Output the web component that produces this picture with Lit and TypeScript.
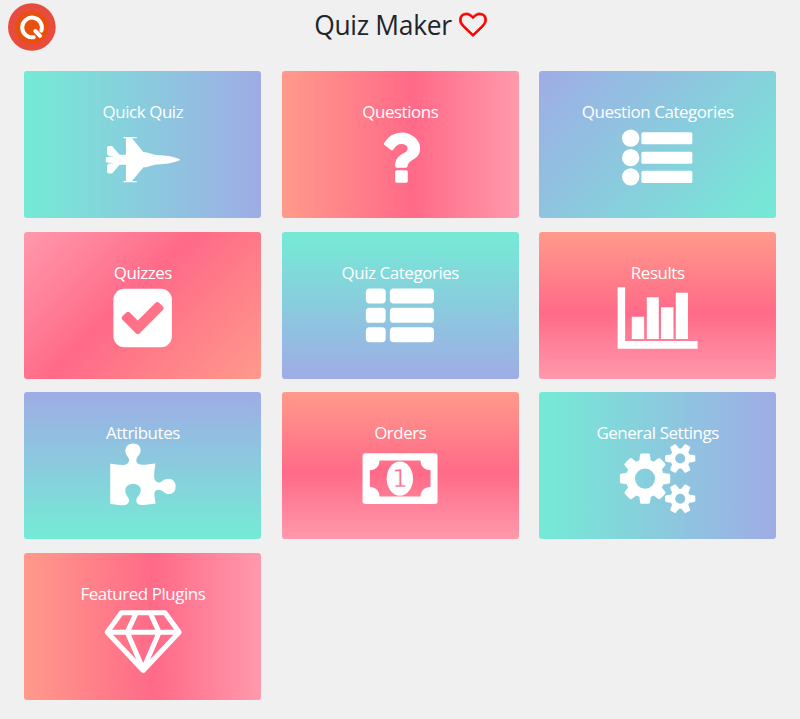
import { LitElement, html, svg, css } from "lit";
import { customElement } from "lit/decorators.js";
import { classMap } from "lit/directives/class-map.js";

const jet = svg`<path d="M1856 960q-1 32-288 96l-352 32-224 64h-64l-293 352h69q26 0 45 4.5t19 11.5-19 11.5-45 4.5h-288v-32h64v-416h-160l-192 224h-96l-32-32v-192h32v-32h128v-8l-192-24v-128l192-24v-8h-128v-32h-32v-192l32-32h96l192 224h160v-416h-64v-32h288q26 0 45 4.5t19 11.5-19 11.5-45 4.5h-69l293 352h64l224 64 352 32q128 28 200 52t80 34z"/>`;
const question = svg`<path d="M1088 1256v240q0 16-12 28t-28 12h-240q-16 0-28-12t-12-28v-240q0-16 12-28t28-12h240q16 0 28 12t12 28zm316-600q0 54-15.5 101t-35 76.5-55 59.5-57.5 43.5-61 35.5q-41 23-68.5 65t-27.5 67q0 17-12 32.5t-28 15.5h-240q-15 0-25.5-18.5t-10.5-37.5v-45q0-83 65-156.5t143-108.5q59-27 84-56t25-76q0-42-46.5-74t-107.5-32q-65 0-108 29-35 25-107 115-13 16-31 16-12 0-25-8l-164-125q-13-10-15.5-25t5.5-28q160-266 464-266 80 0 161 31t146 83 106 127.5 41 158.5z"/>`;
const check = svg`<path d="M813 1299l614-614q19-19 19-45t-19-45l-102-102q-19-19-45-19t-45 19l-467 467-211-211q-19-19-45-19t-45 19l-102 102q-19 19-19 45t19 45l358 358q19 19 45 19t45-19zm851-883v960q0 119-84.5 203.5t-203.5 84.5h-960q-119 0-203.5-84.5t-84.5-203.5v-960q0-119 84.5-203.5t203.5-84.5h960q119 0 203.5 84.5t84.5 203.5z"/>`;
const puzzle = svg`<path d="M1755 1083q0 81-44.5 135t-123.5 54q-41 0-77.5-17.5t-59-38-56.5-38-71-17.5q-110 0-110 124 0 39 16 115t15 115v5q-22 0-33 1-34 3-97.5 11.5t-115.5 13.5-98 5q-61 0-103-26.5t-42-83.5q0-37 17.5-71t38-56.5 38-59 17.5-77.5q0-79-54-123.5t-135-44.5q-84 0-143 45.5t-59 127.5q0 43 15 83t33.5 64.5 33.5 53 15 50.5q0 45-46 89-37 35-117 35-95 0-245-24-9-2-27.5-4t-27.5-4l-13-2q-1 0-3-1-2 0-2-1v-1024q2 1 17.5 3.5t34 5 21.5 3.5q150 24 245 24 80 0 117-35 46-44 46-89 0-22-15-50.5t-33.5-53-33.5-64.5-15-83q0-82 59-127.5t144-45.5q80 0 134 44.5t54 123.5q0 41-17.5 77.5t-38 59-38 56.5-17.5 71q0 57 42 83.5t103 26.5q64 0 180-15t163-17v2q-1 2-3.5 17.5t-5 34-3.5 21.5q-24 150-24 245 0 80 35 117 44 46 89 46 22 0 50.5-15t53-33.5 64.5-33.5 83-15q82 0 127.5 59t45.5 143z"/>`;
const gears = svg`<path d="M832 896q0-106-75-181t-181-75-181 75-75 181 75 181 181 75 181-75 75-181zm768 512q0-52-38-90t-90-38-90 38-38 90q0 53 37.5 90.5t90.5 37.5 90.5-37.5 37.5-90.5zm0-1024q0-52-38-90t-90-38-90 38-38 90q0 53 37.5 90.5t90.5 37.5 90.5-37.5 37.5-90.5zm-384 421v185q0 10-7 19.5t-16 10.5l-155 24q-11 35-32 76 34 48 90 115 7 11 7 20 0 12-7 19-23 30-82.5 89.5t-78.5 59.5q-11 0-21-7l-115-90q-37 19-77 31-11 108-23 155-7 24-30 24h-186q-11 0-20-7.5t-10-17.5l-23-153q-34-10-75-31l-118 89q-7 7-20 7-11 0-21-8-144-133-144-160 0-9 7-19 10-14 41-53t47-61q-23-44-35-82l-152-24q-10-1-17-9.5t-7-19.5v-185q0-10 7-19.5t16-10.5l155-24q11-35 32-76-34-48-90-115-7-11-7-20 0-12 7-20 22-30 82-89t79-59q11 0 21 7l115 90q34-18 77-32 11-108 23-154 7-24 30-24h186q11 0 20 7.5t10 17.5l23 153q34 10 75 31l118-89q8-7 20-7 11 0 21 8 144 133 144 160 0 8-7 19-12 16-42 54t-45 60q23 48 34 82l152 23q10 2 17 10.5t7 19.5zm640 533v140q0 16-149 31-12 27-30 52 51 113 51 138 0 4-4 7-122 71-124 71-8 0-46-47t-52-68q-20 2-30 2t-30-2q-14 21-52 68t-46 47q-2 0-124-71-4-3-4-7 0-25 51-138-18-25-30-52-149-15-149-31v-140q0-16 149-31 13-29 30-52-51-113-51-138 0-4 4-7 4-2 35-20t59-34 30-16q8 0 46 46.5t52 67.5q20-2 30-2t30 2q51-71 92-112l6-2q4 0 124 70 4 3 4 7 0 25-51 138 17 23 30 52 149 15 149 31zm0-1024v140q0 16-149 31-12 27-30 52 51 113 51 138 0 4-4 7-122 71-124 71-8 0-46-47t-52-68q-20 2-30 2t-30-2q-14 21-52 68t-46 47q-2 0-124-71-4-3-4-7 0-25 51-138-18-25-30-52-149-15-149-31v-140q0-16 149-31 13-29 30-52-51-113-51-138 0-4 4-7 4-2 35-20t59-34 30-16q8 0 46 46.5t52 67.5q20-2 30-2t30 2q51-71 92-112l6-2q4 0 124 70 4 3 4 7 0 25-51 138 17 23 30 52 149 15 149 31z"/>`;

const bullets = svg`${[234, 292.5, 350].map(
  (y) => svg`<circle cx="302.5" cy=${y} r="26"/><rect x="334.5" y=${y - 18} width="153" height="36.5" rx="5"/>`
)}`;
const blocks = svg`${[191.5, 249.5, 307.5].map(
  (y) => svg`<rect x="273" y=${y} width="59.5" height="45" rx="11"/><rect x="345" y=${y} width="132.5" height="45" rx="11"/>`
)}`;
const chart = svg`<path d="M263.5 187h22.5v161h217.500v23h-240z"/><path d="M306 275h37v67h-37zM351 217h36v125h-36zM393.500 246.500h37.500v95.500h-37.500zM438 203h36.500v139h-36.500z"/>`;
const money = svg`<path fill-rule="evenodd" d="M271 205H480Q488 205 488 213V349Q488 357 480 357H271Q263 357 263 349V213Q263 205 271 205ZM314 227C314 244 302 256 285 256V306C302 306 314 318 314 335H437C437 318 449 306 467 306V256C449 256 437 244 437 227Z"/><ellipse cx="375" cy="281" rx="39.500" ry="51.500"/><text class="digit" x="375" y="307" text-anchor="middle">1</text>`;
const diamond = svg`<path class="line" d="M318.500 202.500H449.500L492 261L384 375.500L276 261ZM276 261H492M362 205L336 261L384 372L432 261L406 205"/>`;

const items = [
  { label: "Quick Quiz", tone: "mint-right", box: "24 0 1792 1792", icon: jet },
  { label: "Questions", tone: "coral-right", box: "0 -12 1792 1792", icon: question },
  { label: "Question Categories", tone: "mint-corner", box: "276.4 185.4 211.2 211.2", icon: bullets },
  { label: "Quizzes", tone: "coral-corner", box: "-14 -50 1848 1848", icon: check },
  { label: "Quiz Categories", tone: "mint-down", box: "270.4 172 211.2 211.2", icon: blocks },
  { label: "Results", tone: "coral-down", box: "276.6 171 211.2 211.2", icon: chart },
  { label: "Attributes", tone: "mint-up", box: "34 -28 1792 1792", icon: puzzle },
  { label: "Orders", tone: "coral-down", box: "270.4 174.3 211.2 211.2", icon: money },
  { label: "General Settings", tone: "mint-right", box: "-10 -10 1792 1792", icon: gears },
  { label: "Featured Plugins", tone: "coral-right", box: "278.4 176 211.2 211.2", icon: diamond },
];

@customElement("app-root")
export class AppRoot extends LitElement {
  static styles = css`
    :host {
      display: block;
      box-sizing: border-box;
      height: 719px;
      background: #f0f0f0;
      overflow: hidden;
      font-family: "Open Sans", "Noto Sans", sans-serif;
    }
    .header {
      display: grid;
      grid-template-columns: 48px 1fr 48px;
      padding: 3px 8px 0;
      height: 68px;
      box-sizing: border-box;
    }
    .logo {
      width: 48px;
      height: 48px;
    }
    h1 {
      margin: 0;
      display: flex;
      justify-content: center;
      gap: 7px;
      height: 44px;
      align-items: center;
      font-size: 26.4px;
      letter-spacing: -0.28px;
      font-weight: 400;
      color: #212529;
      white-space: nowrap;
      padding-left: 1px;
    }
    .heart {
      width: 28px;
      height: 28px;
      fill: #f00;
      stroke: #f00;
      stroke-width: 50px;
      overflow: visible;
    }
    .grid {
      display: grid;
      grid-template-columns: repeat(3, 237px);
      grid-auto-rows: 147px;
      gap: 13.6px 20.4px;
      padding: 3px 0 0 24.4px;
    }
    .card {
      border-radius: 3px;
      box-sizing: border-box;
      padding-top: 31px;
      display: flex;
      flex-direction: column;
      align-items: center;
      color: #fff;
    }
    .label {
      font-size: 16.9px;
      letter-spacing: -0.42px;
      line-height: 19.8px;
      white-space: nowrap;
    }
    .icon {
      width: 70.4px;
      height: 70.4px;
      flex: none;
      overflow: visible;
      fill: #fff;
    }
    .line {
      fill: none;
      stroke: #fff;
      stroke-width: 15px;
      stroke-linejoin: round;
    }
    .digit {
      font: 75px "DejaVu Sans", sans-serif;
      fill: #ff6f8c;
      stroke: #fff;
      stroke-width: 1.5px;
    }
    .mint-right { background: linear-gradient(90deg, #74ebd5, #9face6); }
    .mint-down { background: linear-gradient(180deg, #74ebd5, #9face6); }
    .mint-up { background: linear-gradient(0deg, #74ebd5, #9face6); }
    .mint-corner { background: linear-gradient(315deg, #74ebd5, #9face6); }
    .coral-right { background: linear-gradient(90deg, #ff9a8b, #ff6a88 55%, #ff99ac); }
    .coral-down { background: linear-gradient(180deg, #ff9a8b, #ff6a88 55%, #ff99ac); }
    .coral-corner { background: linear-gradient(315deg, #ff9a8b, #ff6a88 55%, #ff99ac); }
  `;

  render() {
    return html`
      <header class="header">
        <svg class="logo" viewBox="24 9 144 144">
          <circle cx="95.500" cy="81" r="71.500" fill="#e84c3d" />
          <circle cx="95.500" cy="83" r="49.500" fill="#e8500e" />
          <path d="M124 92A29.500 29.500 0 1 0 101 111.500M106 93L120 107.500" fill="none" stroke="#fff" stroke-width="12" stroke-linecap="round" />
        </svg>
        <h1>
          <span>Quiz Maker</span>
          <svg class="heart" viewBox="-24 0 1840 1840">
            <path d="M1664 596q0-81-21.5-143t-55-98.5-81.5-59.5-94-31-98-8-112 25.5-110.5 64-86.5 72-60 61.5q-18 22-49 22t-49-22q-24-28-60-61.5t-86.5-72-110.5-64-112-25.5-98 8-94 31-81.5 59.5-55 98.5-21.5 143q0 168 187 355l581 560 580-559q188-188 188-356zm128 0q0 221-229 450l-623 600q-18 18-44 18t-44-18l-624-602q-10-8-27.5-26t-55.5-65.5-68-97.5-53.5-121-23.5-138q0-220 127-344t351-124q62 0 126.5 21.5t120 58 95.5 68.5 76 68q36-36 76-68t95.5-68.5 120-58 126.5-21.5q224 0 351 124t127 344z" />
          </svg>
        </h1>
      </header>
      <main class="grid">
        ${items.map(
          (item) => html`
            <div class=${classMap({ card: true, [item.tone]: true })}>
              <span class="label">${item.label}</span>
              <svg class="icon" viewBox=${item.box}>${item.icon}</svg>
            </div>
          `
        )}
      </main>
    `;
  }
}
